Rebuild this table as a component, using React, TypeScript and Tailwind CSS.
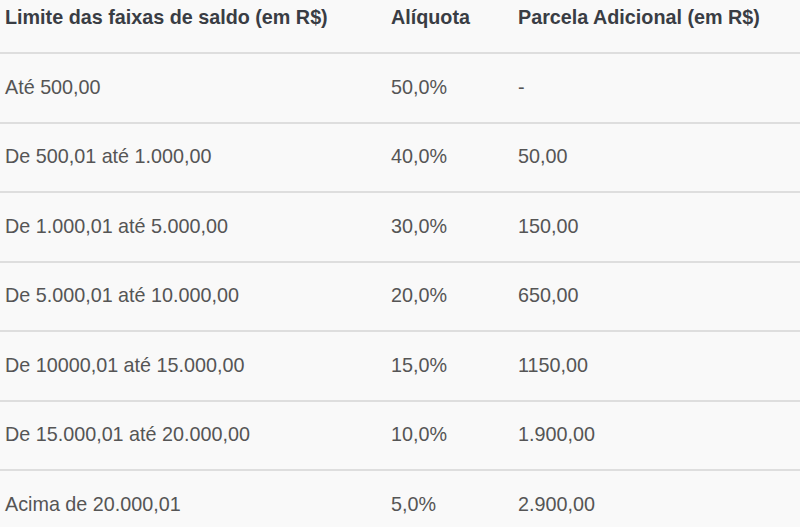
const rows: [string, string, string][] = [
  ["Até 500,00", "50,0%", "-"],
  ["De 500,01 até 1.000,00", "40,0%", "50,00"],
  ["De 1.000,01 até 5.000,00", "30,0%", "150,00"],
  ["De 5.000,01 até 10.000,00", "20,0%", "650,00"],
  ["De 10000,01 até 15.000,00", "15,0%", "1150,00"],
  ["De 15.000,01 até 20.000,00", "10,0%", "1.900,00"],
  ["Acima de 20.000,01", "5,0%", "2.900,00"],
];

export default function App() {
  return (
    <div
      className="h-[527px] w-[800px] overflow-hidden bg-[#f9f9f9] text-[19.75px]"
      style={{ fontFamily: '"Liberation Sans", Arial, sans-serif' }}
    >
      <div className="flex h-[52px] pt-[5px] font-bold leading-6 text-[#393d44]">
        <div className="w-[391px] pl-[5px]">Limite das faixas de saldo (em R$)</div>
        <div className="w-[127px]">Alíquota</div>
        <div className="flex-1">Parcela Adicional (em R$)</div>
      </div>
      {rows.map(([limit, rate, extra]) => (
        <div
          key={limit}
          className="flex h-[69.5px] items-center border-t-2 border-[#dedede] text-[#555555]"
        >
          <div className="w-[391px] pl-[5px]">{limit}</div>
          <div className="w-[127px]">{rate}</div>
          <div className="flex-1">{extra}</div>
        </div>
      ))}
    </div>
  );
}
